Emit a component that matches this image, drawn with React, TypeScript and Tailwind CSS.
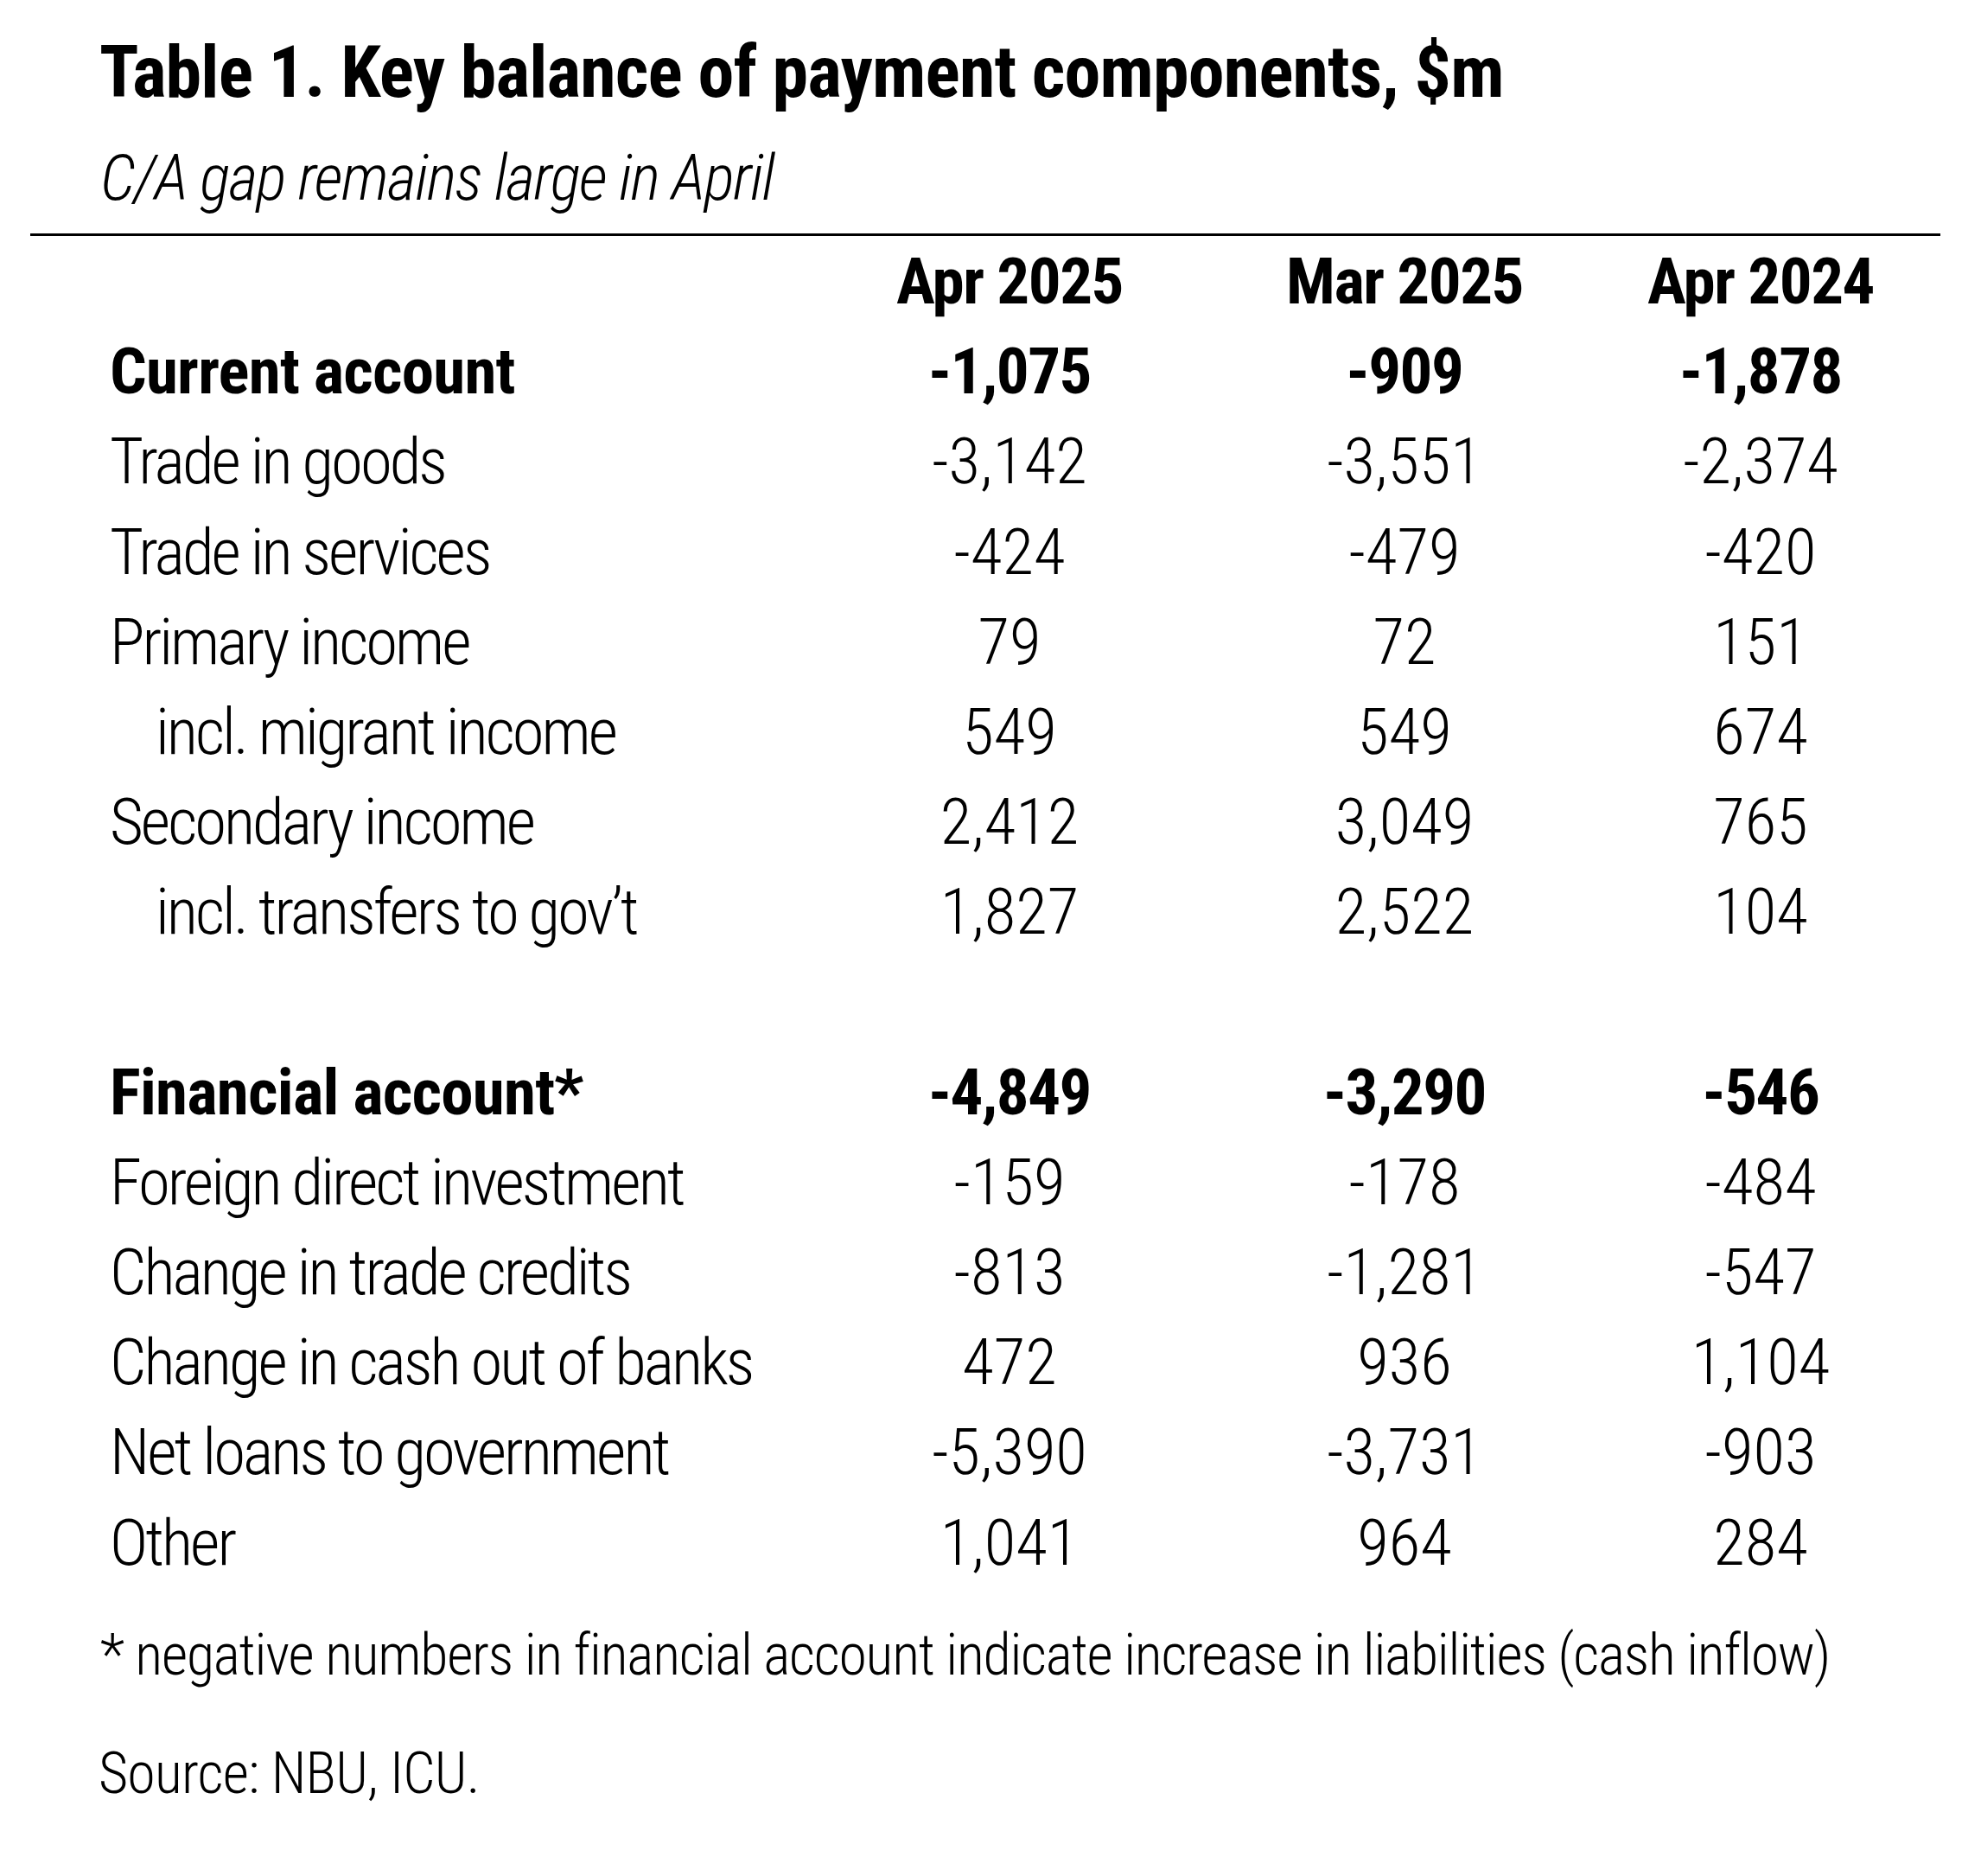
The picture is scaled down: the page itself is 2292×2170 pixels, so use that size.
type Row = {
  label: string;
  values?: [string, string, string];
  bold?: boolean;
  indent?: boolean;
};

const rows: Row[] = [
  { label: "Current account", values: ["-1,075", "-909", "-1,878"], bold: true },
  { label: "Trade in goods", values: ["-3,142", "-3,551", "-2,374"] },
  { label: "Trade in services", values: ["-424", "-479", "-420"] },
  { label: "Primary income", values: ["79", "72", "151"] },
  { label: "incl. migrant income", values: ["549", "549", "674"], indent: true },
  { label: "Secondary income", values: ["2,412", "3,049", "765"] },
  { label: "incl. transfers to gov’t", values: ["1,827", "2,522", "104"], indent: true },
  { label: "" },
  { label: "Financial account*", values: ["-4,849", "-3,290", "-546"], bold: true },
  { label: "Foreign direct investment", values: ["-159", "-178", "-484"] },
  { label: "Change in trade credits", values: ["-813", "-1,281", "-547"] },
  { label: "Change in cash out of banks", values: ["472", "936", "1,104"] },
  { label: "Net loans to government", values: ["-5,390", "-3,731", "-903"] },
  { label: "Other", values: ["1,041", "964", "284"] },
];

function TableRow({ row }: { row: Row }) {
  const weight = row.bold ? "font-bold" : "font-light";
  const labelTracking = row.bold ? "tracking-[-0.01em]" : "tracking-[-0.04em]";
  const numTracking = row.bold ? "tracking-[-0.02em]" : "";
  return (
    <div className={`flex h-[104.2px] text-[75px] leading-[104.2px] whitespace-nowrap ${weight}`}>
      <div className={`w-[905px] ${labelTracking} ${row.indent ? "pl-[145px]" : "pl-[92px]"}`}>{row.label}</div>
      {row.values && (
        <>
          <div className={`w-[456px] text-center ${numTracking}`}>{row.values[0]}</div>
          <div className={`w-[458px] text-center ${numTracking}`}>{row.values[1]}</div>
          <div className={`w-[366px] text-center ${numTracking}`}>{row.values[2]}</div>
        </>
      )}
    </div>
  );
}

export default function App() {
  return (
    <div className="min-h-screen bg-white text-black font-['Roboto',sans-serif] [font-stretch:75%]">
      <div className="px-[35px] pt-[34px] pr-[47px]">
        <h1 className="pl-[80px] text-[84px] leading-[100px] font-bold tracking-[-0.01em] whitespace-nowrap">
          Table 1. Key balance of payment components, $m
        </h1>
        <p className="pl-[81px] mt-[22px] text-[74px] leading-[100px] font-light italic tracking-[-0.023em] whitespace-nowrap">
          C/A gap remains large in April
        </p>
        <div className="mt-[14px] border-t-[3px] border-black" />

        <div className="flex h-[104.2px] text-[75px] leading-[104.2px] font-bold tracking-[-0.02em] whitespace-nowrap">
          <div className="w-[905px]" />
          <div className="w-[456px] text-center">Apr 2025</div>
          <div className="w-[458px] text-center">Mar 2025</div>
          <div className="w-[366px] text-center">Apr 2024</div>
        </div>

        {rows.map((row, i) => (
          <TableRow key={i} row={row} />
        ))}

        <p className="pl-[81px] mt-[29px] text-[66px] leading-[100px] font-light tracking-[-0.019em] whitespace-nowrap">
          * negative numbers in financial account indicate increase in liabilities (cash inflow)
        </p>
        <p className="pl-[79px] mt-[37px] text-[66px] leading-[100px] font-light tracking-[-0.012em] whitespace-nowrap">
          Source: NBU, ICU.
        </p>
      </div>
    </div>
  );
}
